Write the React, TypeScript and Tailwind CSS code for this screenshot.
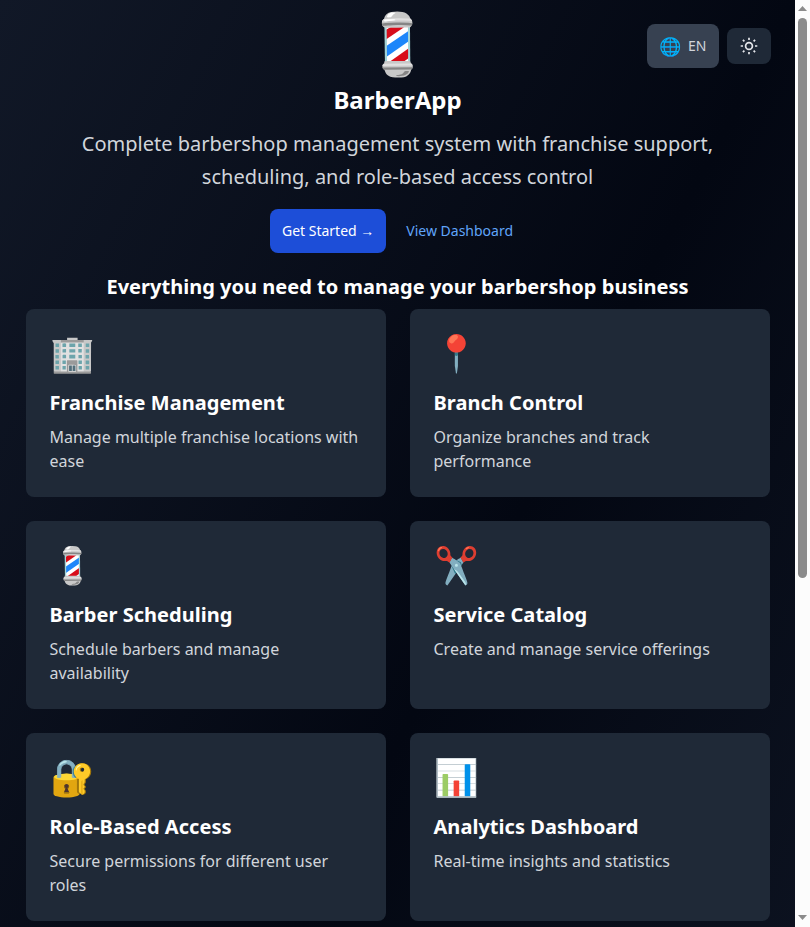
import React from "react";

const features = [
  { icon: "🏢", title: "Franchise Management", text: "Manage multiple franchise locations with ease" },
  { icon: "📍", title: "Branch Control", text: "Organize branches and track performance" },
  { icon: "💈", title: "Barber Scheduling", text: "Schedule barbers and manage availability" },
  { icon: "✂️", title: "Service Catalog", text: "Create and manage service offerings" },
  { icon: "🔐", title: "Role-Based Access", text: "Secure permissions for different user roles" },
  { icon: "📊", title: "Analytics Dashboard", text: "Real-time insights and statistics" },
];

function SunIcon() {
  return (
    <svg className="h-5 w-5" viewBox="0 0 20 20" fill="none" stroke="currentColor" strokeWidth="1.7">
      <circle cx="10" cy="10" r="3.4" />
      <path d="M10 1.7v2.3M10 16v2.3M1.7 10h2.3M16 10h2.3M3.9 3.9l1.5 1.5M14.6 14.6l1.5 1.5M3.9 16.1l1.5-1.5M14.6 5.4l1.5-1.5" />
    </svg>
  );
}

function Scrollbar() {
  return (
    <div className="flex h-full w-[15px] shrink-0 flex-col items-center bg-[#fcfcfc]">
      <svg className="h-[17px] w-[15px] shrink-0" viewBox="0 0 15 17" fill="#8b8b8b">
        <path d="M3 11h9L7.5 6z" />
      </svg>
      <div className="mt-px h-[560px] w-[9px] rounded-full bg-[#8b8b8b]" />
      <svg className="mt-auto h-[17px] w-[15px] shrink-0" viewBox="0 0 15 17" fill="#8b8b8b">
        <path d="M3 5h9L7.5 10z" />
      </svg>
    </div>
  );
}

export default function App() {
  return (
    <div className="flex h-[927px] w-[810px] overflow-hidden font-['Noto_Sans',sans-serif] text-white">
      <main className="relative h-[1484px] w-[795px] shrink-0 bg-linear-to-br/srgb from-[#111827] via-[#030712] to-[#111827]">
        <div className="absolute top-6 right-6 flex items-center gap-2">
          <button className="flex h-11 w-[72px] items-center gap-[7px] rounded-lg bg-[#374151] pl-3 text-sm text-[#d1d5db]">
            <span className="text-lg">🌐</span>
            <span>EN</span>
          </button>
          <button className="flex h-9 w-11 items-center justify-center rounded-lg bg-[#1f2937] text-[#e5e7eb]">
            <SunIcon />
          </button>
        </div>
        <div className="mx-auto flex w-[744px] flex-col items-center pt-3">
          <div className="text-6xl leading-[60px]">💈</div>
          <h1 className="mt-3 text-2xl font-bold">BarberApp</h1>
          <p className="mt-3 w-[672px] text-center text-xl leading-relaxed text-[#d1d5db]">
            Complete barbershop management system with franchise support, scheduling, and role-based access control
          </p>
          <div className="mt-4 flex gap-2 text-sm">
            <button className="h-11 rounded-lg bg-[#1d4ed8] px-3">Get Started →</button>
            <button className="h-11 rounded-lg px-3 text-[#60a5fa]">View Dashboard</button>
          </div>
          <h2 className="mt-5 text-xl font-bold tracking-[0.02px]">Everything you need to manage your barbershop business</h2>
          <div className="mt-2 grid w-full grid-cols-2 gap-6">
            {features.map((f) => (
              <section key={f.title} className="h-[188px] rounded-lg bg-[#1f2937] p-6">
                <div className="mb-4 text-4xl">{f.icon}</div>
                <h3 className="mb-2 text-xl font-bold tracking-[0.03px]">{f.title}</h3>
                <p className="text-[#d1d5db]">{f.text}</p>
              </section>
            ))}
          </div>
        </div>
      </main>
      <Scrollbar />
    </div>
  );
}
